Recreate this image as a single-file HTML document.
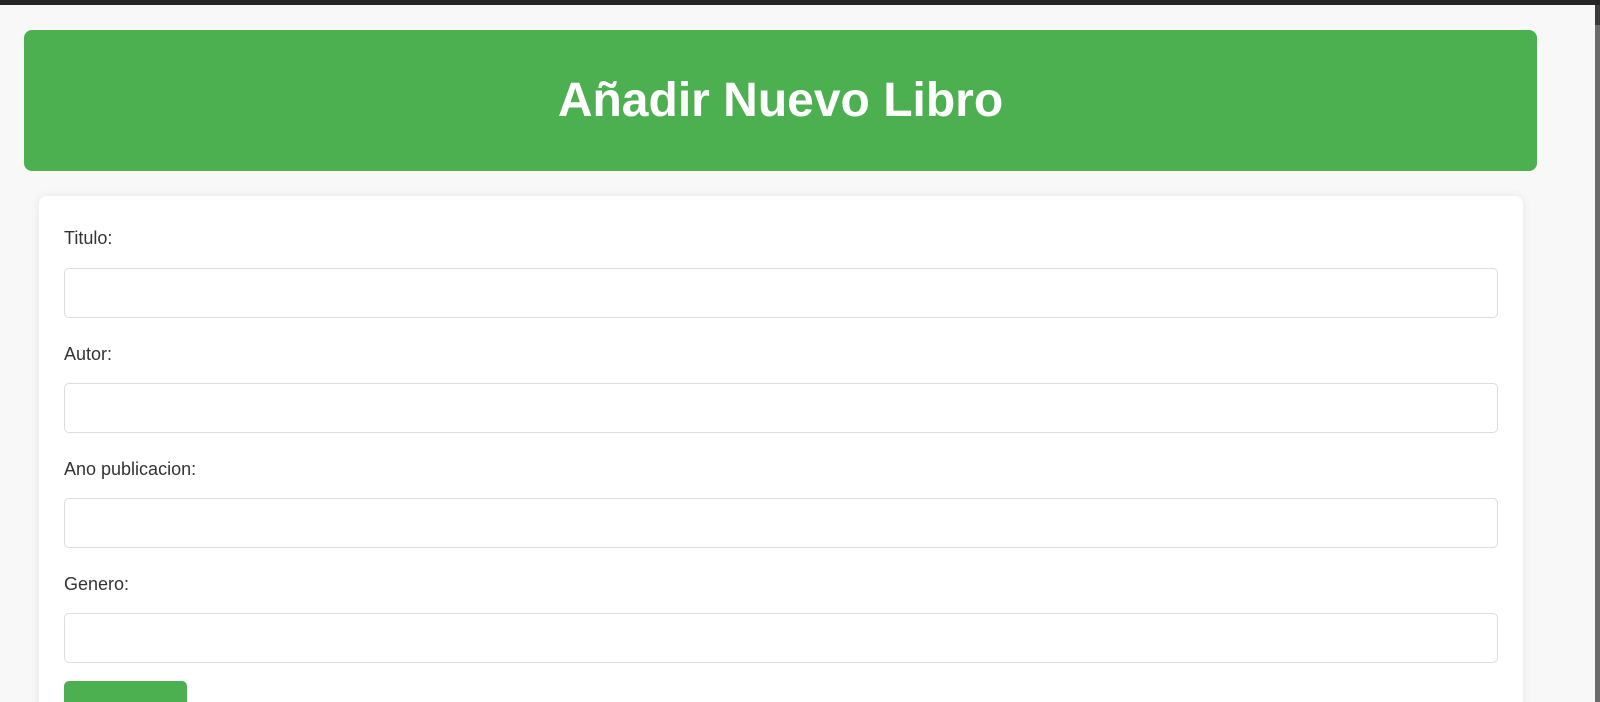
<!DOCTYPE html>
<html><head><meta charset="utf-8"><style>
html,body{margin:0;padding:0;width:1600px;height:702px;overflow:hidden;}
body{background:#f8f8f8;font-family:"Liberation Sans",Arial,sans-serif;position:relative;}
.top{position:absolute;left:0;top:0;width:1600px;height:5px;background:#242424;}
.sb{position:absolute;right:0;top:5px;width:5px;height:697px;background:#6b6b6b;}
.sb:before{content:"";position:absolute;left:0;top:0;width:5px;height:20px;background:#3a3a3a;}
.hdr{position:absolute;left:24px;top:30px;width:1513px;height:141px;background:#4caf50;border-radius:8px;color:#fff;text-align:center;font-weight:bold;font-size:48px;line-height:141px;}
.clip{position:absolute;left:0;top:0;width:1600px;height:702px;overflow:hidden;}
.card{position:absolute;left:39px;top:196px;width:1484px;height:530px;background:#fff;border-radius:8px;box-shadow:0 0 10px rgba(0,0,0,0.08);}
.lbl{position:absolute;left:25px;font-size:18px;color:#333;}
.inp{position:absolute;left:25px;width:1432px;height:48px;border:1px solid #ddd;border-radius:5px;}
.btn{position:absolute;left:25px;top:485px;width:123px;height:40px;background:#4caf50;border-radius:5px;}
</style></head><body>
<div class="clip">
<div class="top"></div>
<div class="hdr">Añadir Nuevo Libro</div>
<div class="card">
<div class="lbl" style="top:32px">Titulo:</div><div class="inp" style="top:72px"></div>
<div class="lbl" style="top:148px">Autor:</div><div class="inp" style="top:187px"></div>
<div class="lbl" style="top:263px">Ano publicacion:</div><div class="inp" style="top:302px"></div>
<div class="lbl" style="top:378px">Genero:</div><div class="inp" style="top:417px"></div>
<div class="btn"></div>
</div>
<div class="sb"></div>
</div>
</body></html>
